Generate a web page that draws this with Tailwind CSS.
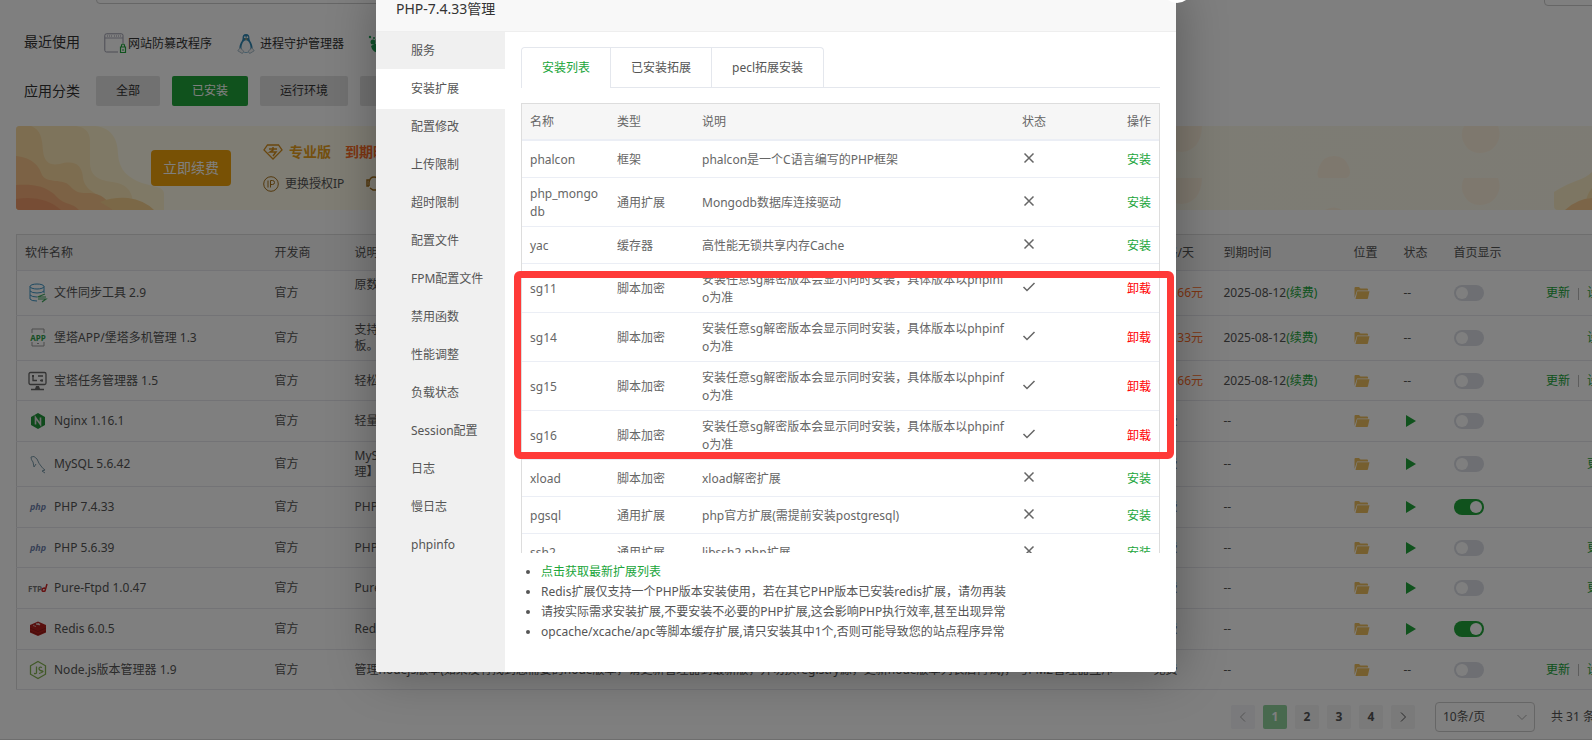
<!DOCTYPE html>
<html lang="zh-CN">
<head>
  <meta charset="UTF-8">
  <meta name="viewport" content="width=device-width, initial-scale=1.0">
  <title>软件商店</title>
  <script src="https://cdn.jsdelivr.net/npm/@tailwindcss/browser@4"></script>
</head>
<body class="relative h-screen overflow-hidden bg-white font-['Noto_Sans','Noto_Sans_CJK_SC',sans-serif] text-xs text-[#555]">

  <!-- 软件商店页面 -->
  <main class="-mt-[26px] -mr-[69px] border-b border-[#ddd] pb-[7px] pl-4">
    <div class="flex h-8 items-start pl-20">
      <input type="text" aria-label="搜索软件" class="h-[30px] w-[500px] rounded border border-[#ccc]">
      <button type="button" aria-label="更新软件列表" class="mr-[17px] ml-auto h-8 w-[100px] rounded border border-[#ccc]"></button>
    </div>

    <div class="mt-4 flex h-10 items-center pl-2">
      <h2 class="w-20 text-sm text-[#333]">最近使用</h2>
      <a href="#" class="flex items-center pt-1 text-[#333]">
        <svg class="size-6" viewBox="0 0 24 24" fill="none">
          <path d="M14 20H2.500Q.8 20 .8 18.300V3.500Q.8 1.800 2.500 1.800H17.500Q19 1.800 19 3.500V11" stroke="#99a"/>
          <path d="M1 6H19" stroke="#aab"/><path d="M3 4H8M10 4H17" stroke="#99a" stroke-dasharray="1 1"/>
          <path d="M17.500 15V13.500Q17.500 12 19 12T20.500 13.500V15" stroke="#20a53a" stroke-width="1.200"/>
          <path d="M16.500 15H21.500V20.500H16.500Z" stroke="#20a53a" stroke-width="1.200"/><path d="M19 17V19" stroke="#20a53a"/>
        </svg>
        网站防篡改程序
      </a>
      <a href="#" class="ml-6 flex items-center gap-1 pt-1 text-[#333]">
        <svg class="size-5" viewBox="0 0 20 22">
          <path d="M10 0C7 0 6 2 6.200 5C6 8 3 10 2.800 15L5 19Q10 22 15 19L17.200 15C17 10 14 8 13.800 5C14 2 13 0 10 0Z" fill="#2f86b3"/>
          <path d="M10 7C7 7 5 12 5 15Q5 20 10 20T15 15C15 12 13 7 10 7Z" fill="#f4f6f8"/>
          <circle cx="8.800" cy="3.500" r="1" fill="#fff"/><circle cx="11.500" cy="3.500" r="1" fill="#fff"/>
          <path d="M8.500 5H12L10 7Z" fill="#c9a15a"/>
          <path d="M3.500 15L1 18.500 6 21.500 7.500 19ZM16.500 15L19 18.500 14 21.500 12.500 19Z" fill="#f0f0f0" stroke="#88a5b8" stroke-width=".8"/>
        </svg>
        进程守护管理器
      </a>
      <a href="#" aria-label="日志分析" class="ml-6 pt-1">
        <svg class="size-5" viewBox="0 0 20 20" fill="#20a557">
          <circle cx="2" cy="3" r="1.200"/><circle cx="6" cy="4" r="1"/><circle cx="5" cy="8" r="2.500"/><circle cx="9" cy="6" r="1.500"/>
          <path d="M3 12Q8 8 13 10L15 17Q8 21 4 15Z"/>
        </svg>
      </a>
    </div>

    <div class="mt-3.5 flex items-center pl-2">
      <h2 class="w-[72px] text-sm text-[#333]">应用分类</h2>
      <div class="flex gap-3 text-[#333]">
        <button type="button" class="h-[30px] rounded-xs bg-[#e2e2e2] px-5">全部</button>
        <button type="button" class="h-[30px] rounded-xs bg-[#20a53a] px-5 text-white">已安装</button>
        <button type="button" class="h-[30px] rounded-xs bg-[#e2e2e2] px-5">运行环境</button>
        <button type="button" class="h-[30px] rounded-xs bg-[#e2e2e2] px-5">系统工具</button>
      </div>
    </div>

    <section class="relative mt-5 flex h-[84px] items-center overflow-hidden rounded bg-linear-to-r from-[#fffbe9] to-[#faf7e9]">
      <svg class="absolute left-0 top-0" width="148" height="84" viewBox="0 0 148 84">
        <path d="M0 0H80C96 2 102 14 102 28C103 44 112 52 126 57L144 62Q148 64 148 68V84H0Z" fill="#fff3cd"/>
        <path d="M0 0H60C72 2 75 8 74 22V36C74 50 82 54 96 56C112 58 118 66 117 84H0Z" fill="#fce8b8"/>
        <path d="M0 0H15C25 4 26 12 27 25C28 36 34 40 44 38C58 34 66 38 67 52C69 66 84 68 92 76Q96 80 96 84H0Z" fill="#fbdaa0"/>
        <path d="M0 30C17 32 23 40 26 49C31 58 47 52 54 60C61 68 66 67 74 67Q90 68 97 84H0Z" fill="#f8c48a"/>
        <path d="M84 76Q97 71 112 72Q128 74 138 84H97Z" fill="#f7d08e"/>
        <path d="M0 59C18 58 28 60 38 68C48 80 56 76 63 84H0Z" fill="#f4ad78"/>
        <path d="M0 73C18 70 34 74 45 84H0Z" fill="#ef9b6b"/>
      </svg>
      <svg class="absolute right-0 top-0" width="507" height="84" viewBox="0 0 507 84" fill="#fdf1dc">
        <path d="M0 0H48Q47 24 28 26Q12 26 0 14ZM0 52H48Q47 76 28 78Q12 78 0 66ZM165 52Q162 50 165 41Q169 30 180 30T195 41Q198 50 192 52ZM171 84Q180 79 188 84ZM310 0H344Q348 10 342 19Q336 27 326 27T311 19Q305 10 310 0ZM310 52H344Q348 62 342 71Q336 79 326 79T311 71Q305 62 310 52Z"/>
        <path d="M400 66Q409 60 422 55Q433 52 440 44Q450 26 507 10V84H404Q400 84 400 80Z" fill="#fbedc6"/>
        <path d="M431 84Q431 68 440 60L507 30V84Z" fill="#f8dfa8"/>
        <path d="M411 84Q424 72 440 72H507V84Z" fill="#f8cb90"/>
      </svg>
      <button type="button" class="relative ml-[135px] h-9 w-20 rounded bg-[#f0a30a] text-sm text-white">立即续费</button>
      <div class="ml-8 flex flex-col gap-3">
        <div class="flex items-center gap-1.5 text-sm leading-5 font-bold text-[#e8a01c]">
          <svg class="h-4 w-5" viewBox="0 0 20 16" fill="none" stroke="#d58e1c" stroke-width="1.300">
            <path d="M4.500 1H15.500L19 6 10 15 1 6Z"/><path d="M6 5H14M10 3V6L7 8H13L10 12" stroke-width="1.500"/>
          </svg>
          专业版
          <span class="ml-2 text-[#fc6d26]">到期时间：2025-08-12</span>
        </div>
        <div class="flex items-center gap-1.5 leading-5">
          <svg class="size-4" viewBox="0 0 16 16" fill="none" stroke="#a8721c">
            <circle cx="8" cy="8" r="7.300"/><path d="M5 4.500V11.500M7.500 11.500V4.500H9.500Q11.500 4.500 11.500 6.500T9.500 8.500H7.500"/>
          </svg>
          更换授权IP
          <svg class="ml-4 size-4" viewBox="0 0 16 16" fill="none" stroke="#a8721c" stroke-width="1.500">
            <path d="M3 4H1V10H3M3 10V6Q4 1 8 1T13 6V10H15V4H13M4 12L7 14H10"/>
          </svg>
          专享客服
        </div>
      </div>
    </section>

    <table class="mt-6 w-full table-fixed border-collapse border border-[#ddd] text-left">
      <thead>
        <tr class="h-9 border-b border-[#e6e6ec] bg-[#f6f6f6]">
          <th class="w-[250px] px-2 font-normal">软件名称</th>
          <th class="w-20 px-2 font-normal">开发商</th>
          <th class="px-2 font-normal">说明</th>
          <th class="w-[70px] px-2 font-normal">价格/天</th>
          <th class="w-[130px] px-2 font-normal">到期时间</th>
          <th class="w-[50px] px-2 font-normal">位置</th>
          <th class="w-[50px] px-2 font-normal">状态</th>
          <th class="w-20 px-2 font-normal">首页显示</th>
          <th class="w-[135px] px-2 text-right font-normal">操作</th>
        </tr>
      </thead>
      <tbody id="softList"></tbody>
    </table>

    <nav class="mt-3 flex items-center gap-2 pl-[1215px]" aria-label="分页">
      <button type="button" aria-label="上一页" class="flex size-6 items-center justify-center rounded-xs bg-[#f4f4f8]">
        <svg class="size-3" viewBox="0 0 12 12" fill="none" stroke="#aaa"><path d="M8 1.500L3.500 6 8 10.500"/></svg>
      </button>
      <button type="button" class="size-6 rounded-xs bg-[#90d29d] font-bold text-white">1</button>
      <button type="button" class="size-6 rounded-xs bg-[#f4f4f5] font-bold">2</button>
      <button type="button" class="size-6 rounded-xs bg-[#f4f4f5] font-bold">3</button>
      <button type="button" class="size-6 rounded-xs bg-[#f4f4f5] font-bold">4</button>
      <button type="button" aria-label="下一页" class="flex size-6 items-center justify-center rounded-xs bg-[#f4f4f5]">
        <svg class="size-3" viewBox="0 0 12 12" fill="none" stroke="#555"><path d="M4 1.500L8.500 6 4 10.500"/></svg>
      </button>
      <div class="relative ml-3">
        <select aria-label="每页条数" class="h-[30px] w-[100px] appearance-none rounded border border-[#ccc] px-[7px]">
          <option>10条/页</option>
          <option>20条/页</option>
        </select>
        <svg class="pointer-events-none absolute top-2.5 right-2 size-2.5" viewBox="0 0 10 10" fill="none" stroke="#aaa"><path d="M.5 3L5 7.500 9.500 3"/></svg>
      </div>
      <span class="ml-2">共 31 条</span>
    </nav>
  </main>

  <div class="absolute inset-0 bg-black/50"></div>

  <!-- PHP 管理弹窗 -->
  <div role="dialog" aria-labelledby="dialogTitle" class="absolute -top-2.5 left-[376px] w-[800px] rounded-xs bg-white shadow-[1px_1px_50px_rgba(0,0,0,0.3)]">
    <button type="button" aria-label="关闭" class="absolute -top-[17px] -right-4 size-[30px] rounded-full border-[3px] border-white bg-[#ccc]"></button>
    <h1 id="dialogTitle" class="h-[42px] border-b border-[#eee] bg-[#f8f8f8] pl-5 text-sm leading-[38px] text-[#333]">PHP-7.4.33管理</h1>

    <div class="flex min-h-[640px]">
      <ul class="w-[129px] shrink-0 rounded-bl-xs bg-[#f0f0f0]">
        <li><a href="#" class="block h-[38px] pl-[35px] leading-[38px]">服务</a></li>
        <li><a href="#" class="relative -my-px block h-10 bg-white pl-[35px] leading-10">安装扩展</a></li>
        <li><a href="#" class="block h-[38px] pl-[35px] leading-[38px]">配置修改</a></li>
        <li><a href="#" class="block h-[38px] pl-[35px] leading-[38px]">上传限制</a></li>
        <li><a href="#" class="block h-[38px] pl-[35px] leading-[38px]">超时限制</a></li>
        <li><a href="#" class="block h-[38px] pl-[35px] leading-[38px]">配置文件</a></li>
        <li><a href="#" class="block h-[38px] pl-[35px] leading-[38px]">FPM配置文件</a></li>
        <li><a href="#" class="block h-[38px] pl-[35px] leading-[38px]">禁用函数</a></li>
        <li><a href="#" class="block h-[38px] pl-[35px] leading-[38px]">性能调整</a></li>
        <li><a href="#" class="block h-[38px] pl-[35px] leading-[38px]">负载状态</a></li>
        <li><a href="#" class="block h-[38px] pl-[35px] leading-[38px]">Session配置</a></li>
        <li><a href="#" class="block h-[38px] pl-[35px] leading-[38px]">日志</a></li>
        <li><a href="#" class="block h-[38px] pl-[35px] leading-[38px]">慢日志</a></li>
        <li><a href="#" class="block h-[38px] pl-[35px] leading-[38px]">phpinfo</a></li>
      </ul>

      <div class="min-w-0 flex-1 px-4 pt-[15px]">
        <div class="flex border-b border-[#e4e7ed]">
          <div class="-mb-px flex rounded-t border-x border-t border-[#e4e7ed]" role="tablist">
            <button type="button" role="tab" aria-selected="true" class="h-10 rounded-tl border-b border-white bg-white px-5 text-[#20a53a]">安装列表</button>
            <button type="button" role="tab" class="h-10 border-b border-l border-[#e4e7ed] px-5">已安装拓展</button>
            <button type="button" role="tab" class="h-10 border-b border-l border-[#e4e7ed] px-5">pecl拓展安装</button>
          </div>
        </div>

        <div class="mt-[15px] h-[450px] overflow-hidden border-x border-t border-[#ddd]">
          <table class="w-full table-fixed border-collapse text-left text-[#666]">
            <thead>
              <tr class="h-9 border-b-2 border-[#ebeef5] bg-[#f6f6f6]">
                <th class="w-[87px] px-2 font-normal">名称</th>
                <th class="w-[85px] px-2 font-normal">类型</th>
                <th class="w-80 px-2 font-normal">说明</th>
                <th class="px-2 font-normal">状态</th>
                <th class="w-20 px-2 text-right font-normal">操作</th>
              </tr>
            </thead>
            <tbody id="extList"></tbody>
          </table>
        </div>

        <ul class="mt-[9px] list-disc pl-5 leading-5">
          <li><a href="#" class="text-[#20a53a]">点击获取最新扩展列表</a></li>
          <li>Redis扩展仅支持一个PHP版本安装使用，若在其它PHP版本已安装redis扩展，请勿再装</li>
          <li>请按实际需求安装扩展,不要安装不必要的PHP扩展,这会影响PHP执行效率,甚至出现异常</li>
          <li>opcache/xcache/apc等脚本缓存扩展,请只安装其中1个,否则可能导致您的站点程序异常</li>
        </ul>
      </div>
    </div>

    <!-- sg 扩展标注框 -->
    <div class="pointer-events-none absolute top-[281px] left-[138px] h-[188px] w-[660px] rounded-md border-[7px] border-[#ff3a38]"></div>
  </div>

  <script>
    // 软件图标
    const icons = {
      sync: '<g fill="none" stroke="#3b94c4"><ellipse cx="9" cy="3.500" rx="7" ry="2.500"/><path d="M2 3.500V16Q3 18 9 18M16 3.500V10M2 8Q4 10 9 10T16 8M2 12Q4 14 9 14"/></g><path d="M17 11L9.500 14H18M10 16H18L14 19" fill="none" stroke="#45a862" stroke-width="1.200"/>',
      app: '<path d="M4 5V1H16V5M4 14V18H16V14M9 15.500H11" fill="none" stroke="#999"/><text x="10" y="12.500" text-anchor="middle" font-size="8" font-weight="bold" fill="#2e9e48">APP</text>',
      task: '<g fill="none" stroke="#666" stroke-width="1.300"><rect x="1" y="1.500" width="17" height="12" rx="1.500"/><path d="M5 5V9.500H9M10 5H15M12 9.500H15M3 18.500H16"/></g><path d="M8 15H11L12 18H7ZM4 4H6V6H4ZM13 8.500H15V10.500H13Z" fill="#666"/>',
      nginx: '<path d="M10 2L17 6V14L10 18 3 14V6Z" fill="#1f9438"/><path d="M7.500 13.500V6.500L12.500 13.500V6.500" fill="none" stroke="#ddd" stroke-width="1.600"/>',
      mysql: '<path d="M3 3Q6 1 9 5Q11 10 13 12Q15 15 17 16L14 17 17 19M3 3Q3 6 5 8L6 13 8 10" fill="none" stroke="#7b9bab"/>',
      php: '<text x="10" y="13" text-anchor="middle" font-size="9" font-weight="bold" font-style="italic" fill="#7183ae">php</text>',
      ftp: '<text x="0" y="14" font-size="8" font-weight="bold" fill="#777">FTP</text><path d="M19 6L17 13Q14 14 14 12T17 10" fill="none" stroke="#c22" stroke-width="1.500"/>',
      redis: '<path d="M2 6L10 2.500 18 6V13.500L10 17 2 13.500Z" fill="#b3211d"/><path d="M2 9L10 12.500 18 9M2 12L10 15.500 18 12" fill="none" stroke="#8a1815" stroke-width=".8"/><path d="M8 5L11 4.500 12 6ZM5 6.500L8 7.500" fill="#eee" stroke="#eee" stroke-width=".6"/>',
      node: '<path d="M10 1.500L17.500 5.800V14.200L10 18.500 2.500 14.200V5.800Z" fill="none" stroke="#83b251" stroke-width="1.300"/><path d="M8.500 6.500V12.500Q8.500 14 6 13.500M14 7.500Q11 6.500 11 8.500T14 11T11 13.500" fill="none" stroke="#83b251" stroke-width="1.300"/>'
    };

    // 已安装软件
    const softs = [
      { icon: 'sync', name: '文件同步工具 2.9', desc: '原数据同步工具，基于rsync开发<br>&nbsp;', price: '132.66元', run: false, on: false, ops: ['更新', '设置', '卸载'], h: 45 },
      { icon: 'app', name: '堡塔APP/堡塔多机管理 1.3', desc: '支持手机端管理服务器，多机管理面<br>板。', price: '123.33元', run: false, on: false, ops: ['设置', '卸载'], h: 45 },
      { icon: 'task', name: '宝塔任务管理器 1.5', desc: '轻松管理进程、启动项、用户、服务、计划任务、会话', price: '132.66元', run: false, on: false, ops: ['更新', '设置', '卸载'], h: 40 },
      { icon: 'nginx', name: 'Nginx 1.16.1', desc: '轻量级，占有内存少，并发能力强', run: true, on: false, ops: ['卸载'], h: 41 },
      { icon: 'mysql', name: 'MySQL 5.6.42', desc: 'MySQL是一种关系数据库管理系统，【推荐使用企业级防篡改管<br>理】', run: true, on: false, ops: ['更新', '卸载'], h: 45 },
      { icon: 'php', name: 'PHP 7.4.33', desc: 'PHP是世界上最好的编程语言', run: true, on: true, ops: ['卸载'], h: 41 },
      { icon: 'php', name: 'PHP 5.6.39', desc: 'PHP是世界上最好的编程语言', run: true, on: false, ops: ['更新', '卸载'], h: 40 },
      { icon: 'ftp', name: 'Pure-Ftpd 1.0.47', desc: 'PureFTPd是一款专注于程序健壮和软件安全的免费FTP服务器软件', run: true, on: false, ops: ['更新', '卸载'], h: 41 },
      { icon: 'redis', name: 'Redis 6.0.5', desc: 'Redis 是一个高性能的key-value数据库', run: true, on: true, ops: ['卸载'], h: 41 },
      { icon: 'node', name: 'Node.js版本管理器 1.9', desc: '管理nodejs版本(如果没有找到您需要的node版本，请更新管理器到最新版，并切换registry源，更新node版本列表后再试)，与PM2管理器互斥', run: false, on: false, ops: ['更新', '设置', '卸载'], h: 40 }
    ];

    const link = t => `<a href="#" class="text-[#20a53a]">${t}</a>`;
    const sep = '<span class="mx-2 inline-block h-3 w-px bg-[#bbb] align-middle"></span>';

    document.getElementById('softList').innerHTML = softs.map(s => `
      <tr class="border-b border-[#e6e6ec]" style="height:${s.h}px">
        <td class="px-2"><div class="flex items-center gap-1.5 pl-[3px]"><svg class="size-5 shrink-0" viewBox="0 0 20 20">${icons[s.icon]}</svg>${s.name}</div></td>
        <td class="px-2">官方</td>
        <td class="px-2 leading-4">${s.desc}</td>
        <td class="pl-2 whitespace-nowrap ${s.price ? 'text-[#fc6d26]' : ''}">${s.price || '免费'}</td>
        <td class="px-2">${s.price ? '2025-08-12' + link('(续费)') : '--'}</td>
        <td class="px-2"><svg class="h-3 w-4" viewBox="0 0 16 12" fill="#edbf5f"><path d="M.5 11V1Q.5 0 1.500 0H5L6.500 1.500H13Q14 1.500 14 2.500V3.500H3Z"/><path d="M3.300 4.300H15.500L14 11Q14 12 13 12H1.500Z"/></svg></td>
        <td class="px-2">${s.run ? '<svg class="ml-0.5 h-3 w-2.5" viewBox="0 0 10 12" fill="#20a53a"><path d="M0 0L10 6 0 12Z"/></svg>' : '--'}</td>
        <td class="px-2"><input type="checkbox" role="switch" aria-label="${s.name} 首页显示" ${s.on ? 'checked' : ''} class="relative block h-4 w-[30px] appearance-none rounded-full bg-[#dcdfe6] before:absolute before:top-0.5 before:left-0.5 before:size-3 before:rounded-full before:bg-white checked:bg-[#20a53a] checked:before:left-4"></td>
        <td class="px-2 text-right whitespace-nowrap">${s.ops.map(link).join(sep)}</td>
      </tr>`).join('');

    // PHP 扩展
    const sgDesc = '安装任意sg解密版本会显示同时安装，具体版本以phpinfo为准';
    const exts = [
      ['phalcon', '框架', 'phalcon是一个C语言编写的PHP框架', false],
      ['php_mongodb', '通用扩展', 'Mongodb数据库连接驱动', false],
      ['yac', '缓存器', '高性能无锁共享内存Cache', false],
      ['sg11', '脚本加密', sgDesc, true],
      ['sg14', '脚本加密', sgDesc, true],
      ['sg15', '脚本加密', sgDesc, true],
      ['sg16', '脚本加密', sgDesc, true],
      ['xload', '脚本加密', 'xload解密扩展', false],
      ['pgsql', '通用扩展', 'php官方扩展(需提前安装postgresql)', false],
      ['ssh2', '通用扩展', 'libssh2 php扩展', false]
    ];

    document.getElementById('extList').innerHTML = exts.map(([name, type, desc, installed]) => `
      <tr class="h-[37px] border-b border-[#ebeef5] leading-[18px] break-all">
        <td class="px-2 pt-[7px] pb-[5px]">${name}</td>
        <td class="px-2 pt-[7px] pb-[5px]">${type}</td>
        <td class="px-2 pt-[7px] pb-[5px]">${desc}</td>
        <td class="px-2 pb-0.5"><svg class="h-3 w-3.5" viewBox="0 0 14 12" fill="none" stroke="#666" stroke-width="1.500">${installed ? '<path d="M1.500 6L5 9.500 12.500 2"/>' : '<path d="M2.500 1.500L11.500 10.500M11.500 1.500L2.500 10.500"/>'}</svg></td>
        <td class="px-2 pt-[7px] pb-[5px] text-right"><a href="#" class="${installed ? 'text-[#f00]' : 'text-[#20a53a]'}">${installed ? '卸载' : '安装'}</a></td>
      </tr>`).join('');
  </script>
</body>
</html>
